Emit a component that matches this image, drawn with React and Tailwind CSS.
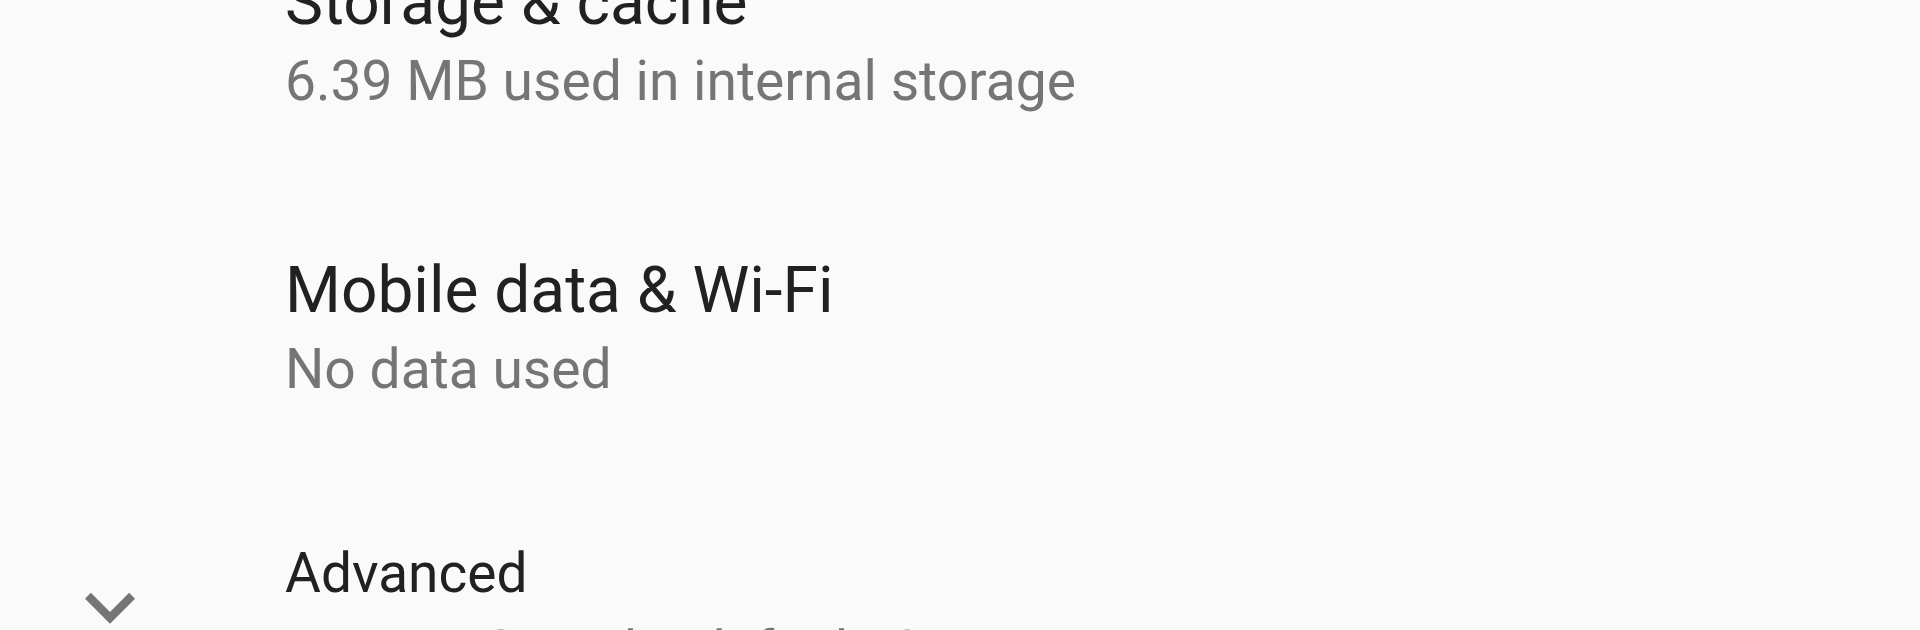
import React from "react";

function Row({ title, summary, pb }) {
  return (
    <div className={"flex pt-[66px] " + (pb === "66" ? "pb-[66px]" : "pb-[68px]")}>
      <div className="w-[285px] shrink-0" />
      <div className="flex flex-col">
        <div className="text-[64px] leading-[76px] text-[#212121] whitespace-nowrap">{title}</div>
        <div className="text-[55.2px] leading-[80px] text-[#757575] whitespace-nowrap">{summary}</div>
      </div>
    </div>
  );
}

export default function App() {
  return (
    <div
      className="w-[1920px] h-[630px] overflow-hidden bg-[#fafafa]"
      style={{ fontFamily: "Roboto, 'Noto Sans', sans-serif" }}
    >
      <div className="flex flex-col mt-[-101px]">
        <Row title="Storage & cache" summary="6.39 MB used in internal storage" pb="66" />
        <Row title="Mobile data & Wi-Fi" summary="No data used" />
        <div className="flex pt-[62px] pb-[68px]">
          <div className="w-[285px] shrink-0">
            <svg
              className="ml-[60px] mt-[18px]"
              width="100"
              height="100"
              viewBox="0 0 24 24"
              fill="#757575"
            >
              <path d="M16.59 8.59L12 13.17 7.41 8.59 6 10l6 6 6-6z" />
            </svg>
          </div>
          <div className="flex flex-col">
            <div className="text-[55px] leading-[68px] text-[#212121] whitespace-nowrap">Advanced</div>
            <div className="text-[55.2px] leading-[88px] text-[#757575] whitespace-nowrap">
              Battery, Open by default, Store
            </div>
          </div>
        </div>
      </div>
    </div>
  );
}
